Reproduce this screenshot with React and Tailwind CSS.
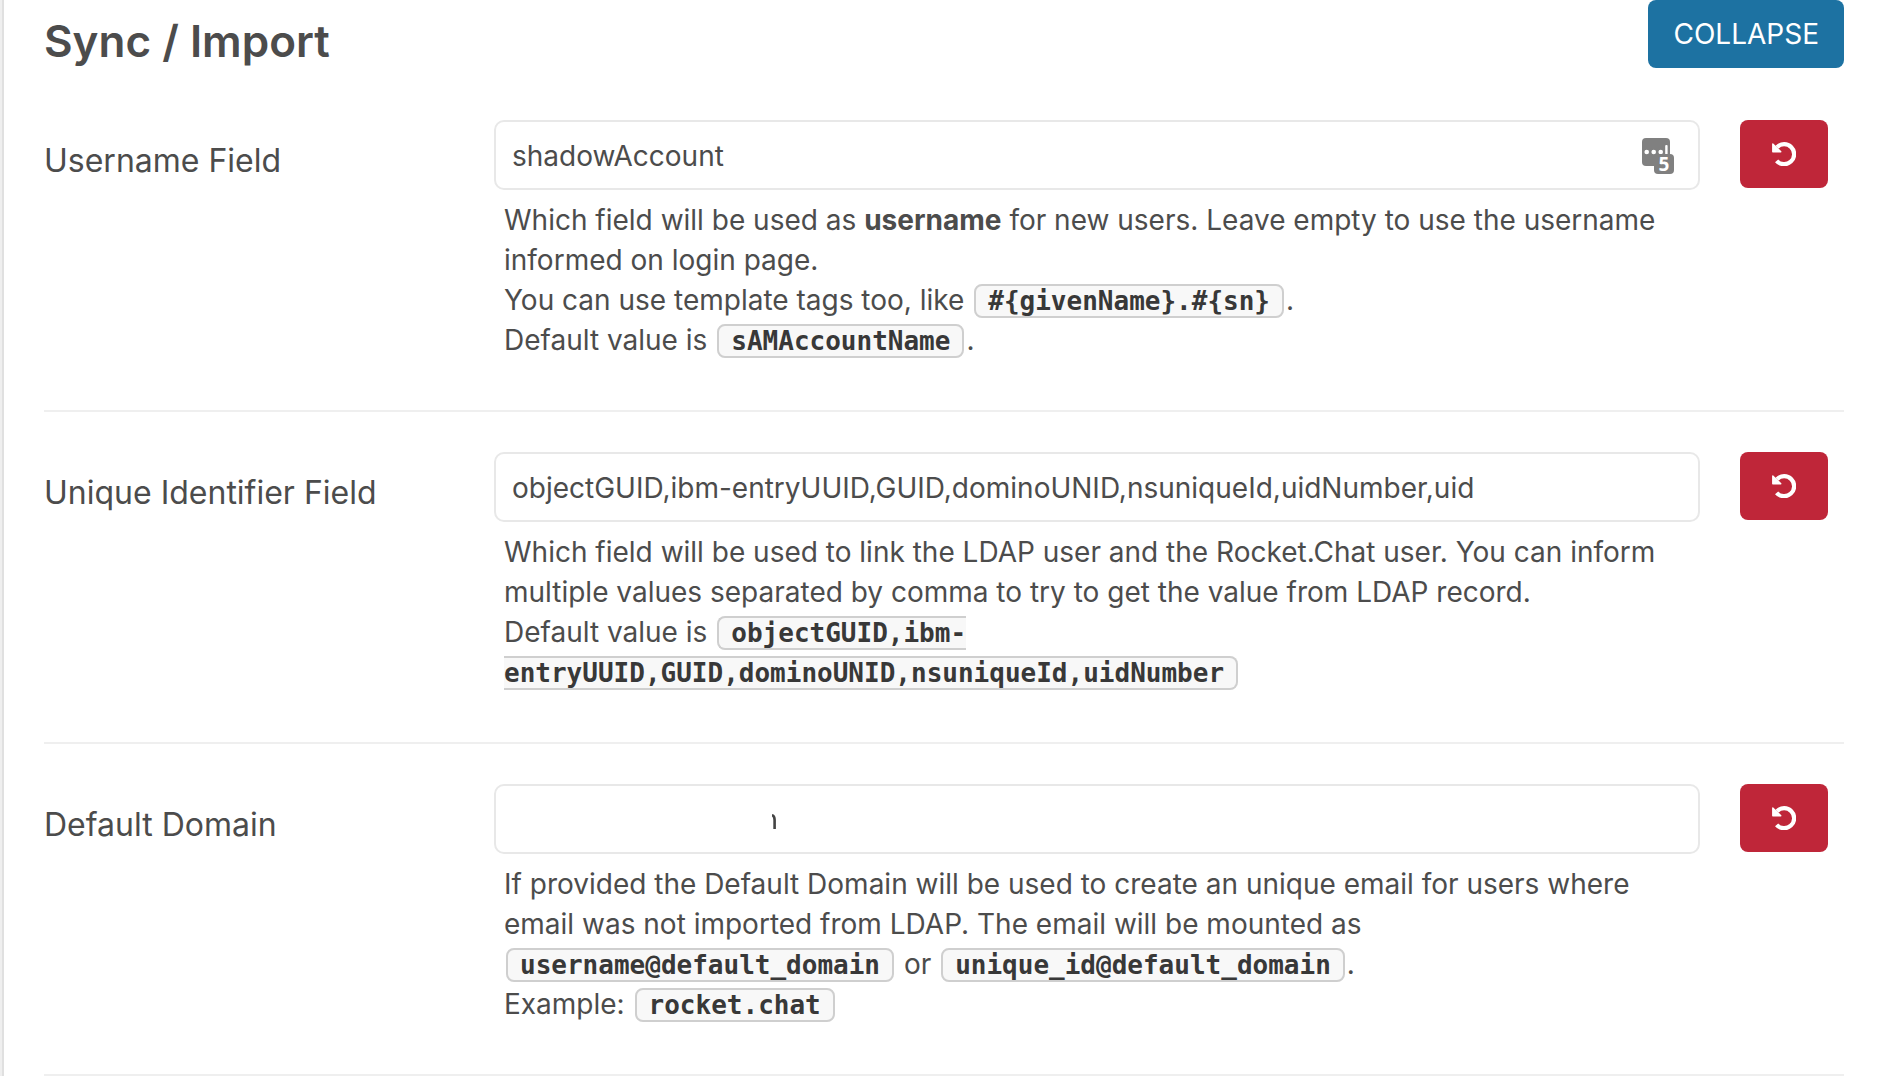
import { useId } from "react";

function Code({ children }) {
  return (
    <code className="mx-0.5 rounded-lg border-2 border-[#cfcfcf] bg-[#f8f8f8] px-3 font-['DejaVu_Sans_Mono','Liberation_Mono',monospace] text-[26px] leading-none font-bold text-[#383838]">
      {children}
    </code>
  );
}

function ResetIcon() {
  return (
    <svg viewBox="0 0 24 24" className="size-6" fill="none" aria-hidden="true">
      <path d="M5 5.2A10 10 0 1 1 4.6 18.8" stroke="currentColor" strokeWidth="4.2" />
      <path
        d="M.8 2V9.8H8.8Z"
        fill="currentColor"
        stroke="currentColor"
        strokeWidth="1.4"
        strokeLinejoin="round"
      />
    </svg>
  );
}

function PasswordManagerIcon() {
  return (
    <svg viewBox="0 0 32 36" className="absolute top-[18px] right-[26px] h-9 w-8 overflow-visible" aria-hidden="true">
      <rect width="28" height="28" rx="4" fill="#808080" />
      <circle cx="4.7" cy="14" r="2.3" fill="#fff" />
      <circle cx="11.7" cy="14" r="2.3" fill="#fff" />
      <circle cx="18.7" cy="14" r="2.3" fill="#fff" />
      <rect x="23.2" y="7" width="2.4" height="10" rx="1" fill="#fff" />
      <rect x="12" y="16" width="20" height="20" rx="4" fill="#808080" />
      <text x="22" y="33" textAnchor="middle" fill="#fff" fontFamily="Open Sans, sans-serif" fontSize="19" fontWeight="700">
        5
      </text>
    </svg>
  );
}

function TextRemnant() {
  return (
    <svg viewBox="0 0 4 15" className="absolute top-[30px] left-[278px] h-[15px] w-1" fill="none" aria-hidden="true">
      <path d="M0 1.2Q2.6 1.8 2.6 6V15" stroke="#444" strokeWidth="2.6" />
    </svg>
  );
}

function Setting({ label, value, adornment, children }) {
  const id = useId();
  return (
    <section className="flex items-start border-b-2 border-[#efefef] pt-10 pb-[50px]">
      <label htmlFor={id} className="w-1/4 shrink-0 pt-[21px] text-[32px] leading-10">
        {label}
      </label>
      <div className="min-w-0 flex-1">
        <div className="relative">
          <input
            id={id}
            type="text"
            defaultValue={value}
            className="block h-[70px] w-full rounded-[10px] border-2 border-[#e8e8e8] bg-white px-4 pt-0.5 text-[28px] outline-none"
          />
          {adornment}
        </div>
        <p className="px-2.5 pt-2.5 text-[28px] leading-10">{children}</p>
      </div>
      <button
        type="button"
        aria-label={`Reset ${label}`}
        className="mr-4 ml-10 flex h-[68px] w-[88px] shrink-0 items-center justify-center rounded-lg bg-[#bf2639] text-white"
      >
        <ResetIcon />
      </button>
    </section>
  );
}

export default function App() {
  return (
    <div className="min-h-screen bg-[#efefef] pl-0.5">
      <main className="min-h-screen border-l-2 border-[#e0e0e0] bg-white pr-[34px] pl-10 font-['Inter',sans-serif] text-[#4c4c4c]">
        <header className="flex items-start justify-between pb-2.5">
          <h2 className="pt-3 text-[44px] leading-[58px] font-semibold">Sync / Import</h2>
          <button type="button" className="h-[68px] rounded-lg bg-[#1d72a2] px-[25px] text-[28px] text-white">
            COLLAPSE
          </button>
        </header>

        <Setting label="Username Field" value="shadowAccount" adornment={<PasswordManagerIcon />}>
          Which field will be used as <b>username</b> for new users. Leave empty to use the username informed on login
          page.
          <br />
          You can use template tags too, like <Code>{"#{givenName}.#{sn}"}</Code>.
          <br />
          Default value is <Code>sAMAccountName</Code>.
        </Setting>
        <Setting label="Unique Identifier Field" value="objectGUID,ibm-entryUUID,GUID,dominoUNID,nsuniqueId,uidNumber,uid">
          Which field will be used to link the LDAP user and the Rocket.Chat user. You can inform multiple values
          separated by comma to try to get the value from LDAP record.
          <br />
          Default value is <Code>objectGUID,ibm-entryUUID,GUID,dominoUNID,nsuniqueId,uidNumber</Code>
        </Setting>
        <Setting label="Default Domain" value="" adornment={<TextRemnant />}>
          If provided the Default Domain will be used to create an unique email for users where email was not imported
          from LDAP. The email will be mounted as <Code>username@default_domain</Code> or{" "}
          <Code>unique_id@default_domain</Code>.
          <br />
          Example: <Code>rocket.chat</Code>
        </Setting>
      </main>
    </div>
  );
}
